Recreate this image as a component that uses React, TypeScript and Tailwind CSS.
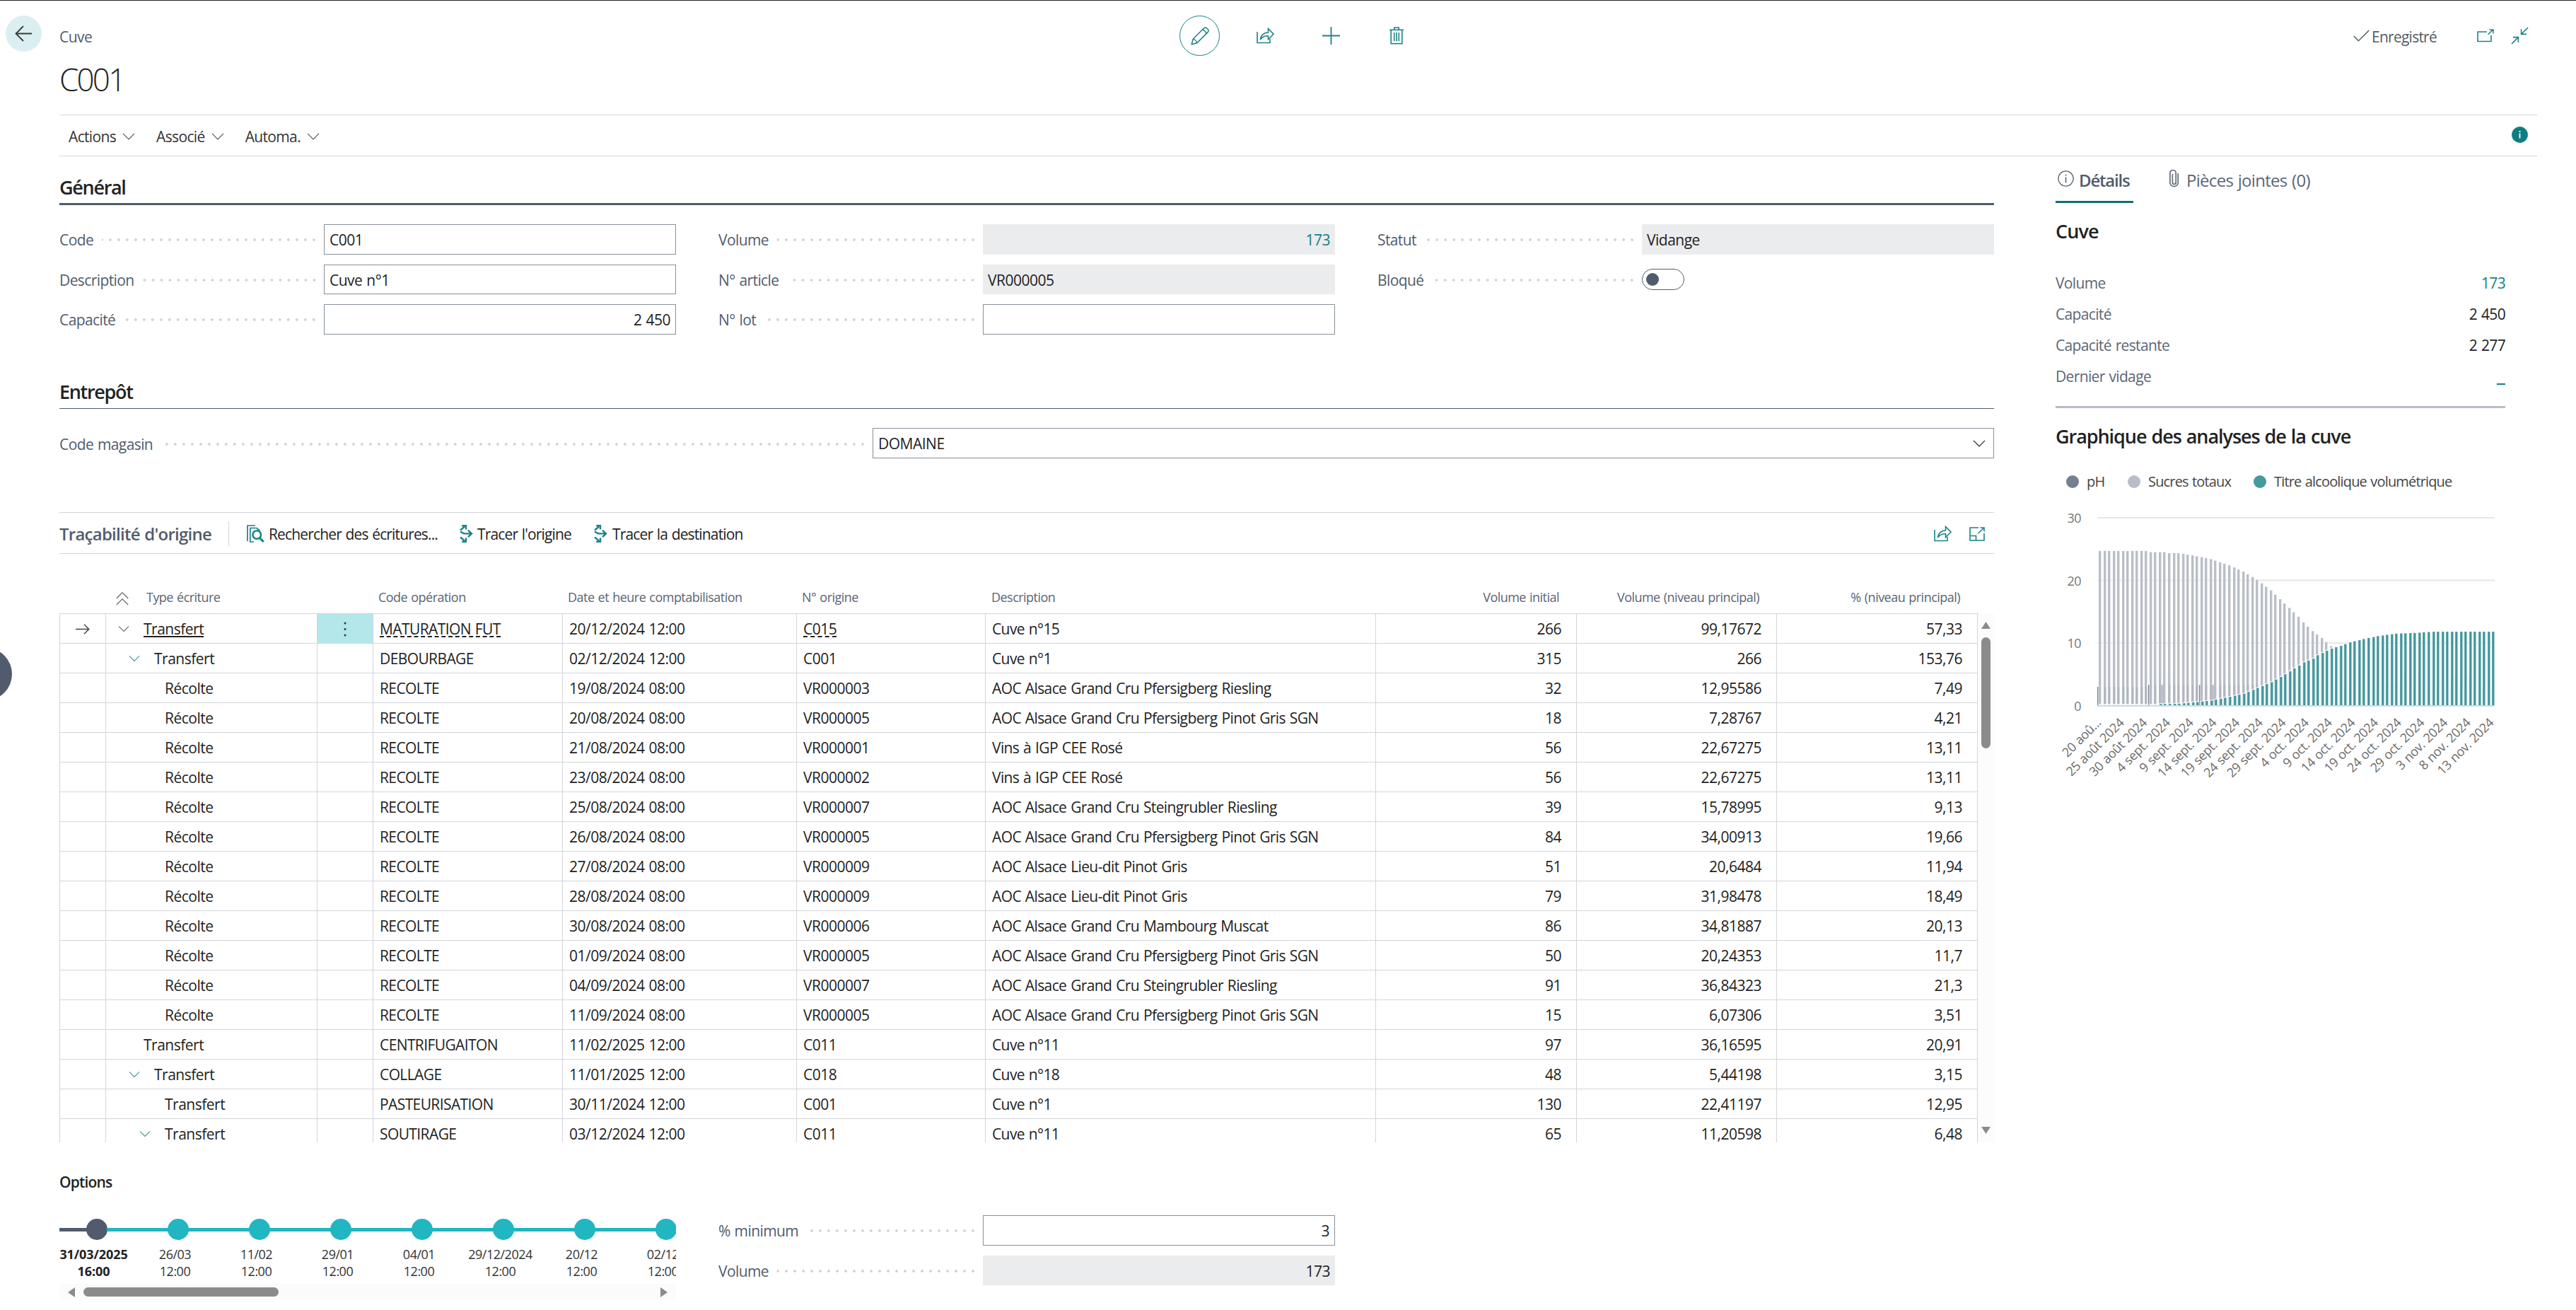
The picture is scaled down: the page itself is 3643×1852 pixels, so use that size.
import type { ReactNode } from 'react';

type Row = {
  level: number;
  open?: boolean;
  type: string;
  code: string;
  date: string;
  origin: string;
  description: string;
  volume: string;
  mainVolume: string;
  percent: string;
};

const row = (
  level: number,
  open: boolean,
  type: string,
  code: string,
  date: string,
  origin: string,
  description: string,
  volume: string,
  mainVolume: string,
  percent: string,
): Row => ({ level, open, type, code, date, origin, description, volume, mainVolume, percent });

const ROWS: Row[] = [
  row(0, true, 'Transfert', 'MATURATION FUT', '20/12/2024 12:00', 'C015', 'Cuve n°15', '266', '99,17672', '57,33'),
  row(1, true, 'Transfert', 'DEBOURBAGE', '02/12/2024 12:00', 'C001', 'Cuve n°1', '315', '266', '153,76'),
  row(2, false, 'Récolte', 'RECOLTE', '19/08/2024 08:00', 'VR000003', 'AOC Alsace Grand Cru Pfersigberg Riesling', '32', '12,95586', '7,49'),
  row(2, false, 'Récolte', 'RECOLTE', '20/08/2024 08:00', 'VR000005', 'AOC Alsace Grand Cru Pfersigberg Pinot Gris SGN', '18', '7,28767', '4,21'),
  row(2, false, 'Récolte', 'RECOLTE', '21/08/2024 08:00', 'VR000001', 'Vins à IGP CEE Rosé', '56', '22,67275', '13,11'),
  row(2, false, 'Récolte', 'RECOLTE', '23/08/2024 08:00', 'VR000002', 'Vins à IGP CEE Rosé', '56', '22,67275', '13,11'),
  row(2, false, 'Récolte', 'RECOLTE', '25/08/2024 08:00', 'VR000007', 'AOC Alsace Grand Cru Steingrubler Riesling', '39', '15,78995', '9,13'),
  row(2, false, 'Récolte', 'RECOLTE', '26/08/2024 08:00', 'VR000005', 'AOC Alsace Grand Cru Pfersigberg Pinot Gris SGN', '84', '34,00913', '19,66'),
  row(2, false, 'Récolte', 'RECOLTE', '27/08/2024 08:00', 'VR000009', 'AOC Alsace Lieu-dit Pinot Gris', '51', '20,6484', '11,94'),
  row(2, false, 'Récolte', 'RECOLTE', '28/08/2024 08:00', 'VR000009', 'AOC Alsace Lieu-dit Pinot Gris', '79', '31,98478', '18,49'),
  row(2, false, 'Récolte', 'RECOLTE', '30/08/2024 08:00', 'VR000006', 'AOC Alsace Grand Cru Mambourg Muscat', '86', '34,81887', '20,13'),
  row(2, false, 'Récolte', 'RECOLTE', '01/09/2024 08:00', 'VR000005', 'AOC Alsace Grand Cru Pfersigberg Pinot Gris SGN', '50', '20,24353', '11,7'),
  row(2, false, 'Récolte', 'RECOLTE', '04/09/2024 08:00', 'VR000007', 'AOC Alsace Grand Cru Steingrubler Riesling', '91', '36,84323', '21,3'),
  row(2, false, 'Récolte', 'RECOLTE', '11/09/2024 08:00', 'VR000005', 'AOC Alsace Grand Cru Pfersigberg Pinot Gris SGN', '15', '6,07306', '3,51'),
  row(0, false, 'Transfert', 'CENTRIFUGAITON', '11/02/2025 12:00', 'C011', 'Cuve n°11', '97', '36,16595', '20,91'),
  row(1, true, 'Transfert', 'COLLAGE', '11/01/2025 12:00', 'C018', 'Cuve n°18', '48', '5,44198', '3,15'),
  row(2, false, 'Transfert', 'PASTEURISATION', '30/11/2024 12:00', 'C001', 'Cuve n°1', '130', '22,41197', '12,95'),
  row(2, true, 'Transfert', 'SOUTIRAGE', '03/12/2024 12:00', 'C011', 'Cuve n°11', '65', '11,20598', '6,48'),
];

const STEPS = [
  ['31/03/2025', '16:00'],
  ['26/03', '12:00'],
  ['11/02', '12:00'],
  ['29/01', '12:00'],
  ['04/01', '12:00'],
  ['29/12/2024', '12:00'],
  ['20/12', '12:00'],
  ['02/12', '12:00'],
];

/* ---------- icons ---------- */

function Chevron({ className = 'text-[#555]' }: { className?: string }) {
  return (
    <svg width="18" height="10" viewBox="0 0 18 10" fill="none" stroke="currentColor" strokeWidth="1.2" className={className}>
      <path d="M1 0.8 9 8.8 17 0.8" />
    </svg>
  );
}

function ShareIcon() {
  return (
    <svg width="25" height="23" viewBox="0 0 25 23" fill="none" stroke="#1a8288" strokeWidth="1.6">
      <path d="M1 6V21.5H19V16" />
      <path d="M5.5 17C6 11.5 10 7 16.5 7V1.5L24 9.2 16.5 16.5V11.8C11.5 11.4 8 13 5.5 17Z" strokeLinejoin="miter" />
    </svg>
  );
}

function PencilIcon() {
  return (
    <svg width="26" height="26" viewBox="0 0 26 26" fill="none" stroke="#1a8288" strokeWidth="1.5" strokeLinejoin="round">
      <path d="M1.2 24.8 3.2 17.2 18.6 1.8C19.8.8 21.6.8 22.8 2L24 3.2C25.2 4.4 25.2 6.2 24.2 7.4L8.8 22.8Z" />
      <path d="M3.2 17.2C5.6 17.6 8.2 20.2 8.8 22.8M16.4 4C18.8 4.6 21.4 7.2 22 9.6" />
    </svg>
  );
}

function TrashIcon() {
  return (
    <svg width="20" height="25" viewBox="0 0 20 25" fill="none" stroke="#1a8288" strokeWidth="1.6">
      <path d="M0 4.2H20M6.8 4V1H13.2V4M2.2 4.5V23.8H17.8V4.5" />
      <path d="M6.7 8V20M10 8V20M13.3 8V20" />
    </svg>
  );
}

function LookupIcon() {
  return (
    <svg width="25" height="25" viewBox="0 0 25 25" fill="none" stroke="#1a8288">
      <path d="M1 23V1H12" strokeWidth="1.7" />
      <path d="M10 24H4.8V4.5H14L18.5 8" strokeWidth="1.7" />
      <circle cx="14.2" cy="14" r="5.8" strokeWidth="2.6" />
      <path d="M17.8 18.2 23.8 24" strokeWidth="3" />
    </svg>
  );
}

function TraceIcon() {
  return (
    <svg width="19" height="25" viewBox="0 0 19 25" fill="none" stroke="#1a8288" strokeWidth="2.4">
      <path d="M1 7.5 7 2.6M3.2 1.2H9V6.4" />
      <path d="M1 9.5 6 12.4H16M12 7.6 17 12.4 12 17.2" />
      <path d="M1 17.5 7 22.4M3.2 23.8H9V18.6" />
    </svg>
  );
}

function InfoIcon() {
  return (
    <svg width="23" height="23" viewBox="0 0 23 23" fill="none" stroke="#5b6676" strokeWidth="1.4">
      <circle cx="11.5" cy="11.5" r="10.6" />
      <path d="M11.5 9.4V17.4M11.5 5.6V7.4" strokeWidth="1.6" />
    </svg>
  );
}

function ClipIcon() {
  return (
    <svg width="13" height="25" viewBox="0 0 13 25" fill="none" stroke="#5b6676" strokeWidth="1.6">
      <path d="M12.2 5V18.6A5.7 5.7 0 0 1 .9 18.6V4.6A3.9 3.9 0 0 1 9.2 4.6V18A2.1 2.1 0 0 1 4.4 18V6" />
    </svg>
  );
}

/* ---------- form fields ---------- */

function Label({ children, width = 'w-[374px]' }: { children: ReactNode; width?: string }) {
  return (
    <div className={`flex ${width} shrink-0 items-center pr-[8px] pt-[2px]`}>
      <span className="whitespace-nowrap tracking-[-0.6px] text-[#505c6d]">{children}</span>
      <span className="ml-[12px] h-[12px] flex-1 bg-[radial-gradient(circle,#cfd1d5_1.5px,transparent_2px)] bg-[length:12px_12px] bg-[position:right_center]" />
    </div>
  );
}

function Field({ label, value = '', readOnly, right, link }: {
  label: string;
  value?: string;
  readOnly?: boolean;
  right?: boolean;
  link?: boolean;
}) {
  return (
    <div className="flex h-[42.5px]">
      <Label>{label}</Label>
      <div
        className={`flex h-full flex-1 items-center px-[7px] pt-[2px] tracking-[-0.5px] ${readOnly ? 'bg-[#ebecee]' : 'border border-[#87909a]'} ${
          right ? 'justify-end' : ''
        } ${link ? 'text-[#167e84]' : ''}`}
      >
        {value}
      </div>
    </div>
  );
}

/* ---------- page header ---------- */

function Header() {
  return (
    <header>
      <div className="mt-[21px] flex h-[57px] items-center pr-[67px]">
        <div className="flex w-[1668px] items-center pl-[8px]">
          <div className="-mt-[6px] flex size-[51px] items-center justify-center rounded-full bg-[#dbeff2]">
            <svg width="25" height="23" viewBox="0 0 25 23" fill="none" stroke="#3b3b3b" strokeWidth="1.8">
              <path d="M24 11.5H1.5M12 1 1.5 11.5 12 22" />
            </svg>
          </div>
          <span className="ml-[25px] mt-[2px] tracking-[-0.5px] text-[#505c6d]">Cuve</span>
        </div>
        <div className="flex size-[57px] items-center justify-center rounded-full border-[1.5px] border-[#1a8288]">
          <PencilIcon />
        </div>
        <div className="ml-[52px]"><ShareIcon /></div>
        <svg width="25" height="25" viewBox="0 0 25 25" stroke="#1a8288" strokeWidth="1.8" className="ml-[68px]">
          <path d="M12.5 0V25M0 12.5H25" />
        </svg>
        <div className="ml-[70px]"><TrashIcon /></div>
        <div className="ml-auto flex items-center">
          <svg width="23" height="17" viewBox="0 0 23 17" fill="none" stroke="#505c6d" strokeWidth="1.5">
            <path d="M.8 9 7.4 15.8 22.2 1" />
          </svg>
          <span className="ml-[3px] mt-[2px] tracking-[-0.75px] text-[#505c6d]">Enregistré</span>
          <svg width="24" height="19" viewBox="0 0 24 19" fill="none" stroke="#1a8288" strokeWidth="1.6" className="ml-[57px]">
            <path d="M14 4H1V17.5H20V9M15.5 7.8 22.5 1M17.5 1H23V6.2" />
          </svg>
          <svg width="25" height="25" viewBox="0 0 25 25" fill="none" stroke="#1a8288" strokeWidth="1.6" className="ml-[24px]">
            <path d="M24 1 15 10M14.6 3.2V10.4H22M1 24 10 15M3 14.6H10.4V22" />
          </svg>
        </div>
      </div>
      <h1 className="h-[83px] pl-[84px] pt-[3px] text-[44px] font-light leading-[60px] tracking-[-2.8px] text-[#222]">C001</h1>
      <div className="ml-[84px] mr-[55px] flex h-[59px] items-center gap-[30px] border-y border-[#d2d4d9] pl-[13px] pr-[13px] pt-[2px] tracking-[-0.65px] text-[#333]">
        {['Actions', 'Associé', 'Automa.'].map((item) => (
          <div key={item} className="flex items-center gap-[9px]">
            {item}
            <Chevron />
          </div>
        ))}
        <svg width="23" height="23" viewBox="0 0 23 23" className="-mt-[5px] ml-auto">
          <circle cx="11.5" cy="11.5" r="11.4" fill="#127c83" />
          <path d="M11.5 9.5V16.5M11.5 6V8" stroke="#fff" strokeWidth="1.8" />
        </svg>
      </div>
    </header>
  );
}

/* ---------- traceability table ---------- */

function Cell({ className = '', children }: { className?: string; children?: ReactNode }) {
  return <div className={`flex shrink-0 items-center whitespace-nowrap border-b border-r border-[#d4d5da] pt-[1px] ${className}`}>{children}</div>;
}

function TableRow({ item, active }: { item: Row; active: boolean }) {
  const indent = item.level === 0 ? 'pl-[17px]' : item.level === 1 ? 'pl-[32px]' : 'pl-[47px]';
  const link = active ? 'mt-[2px] border-b-2 border-dashed border-[#222] leading-[20px]' : '';
  return (
    <div className="flex h-[42px] border-l border-[#d4d5da]">
      <Cell className="w-[65px] justify-center">
        {active && (
          <svg width="20" height="15" viewBox="0 0 20 15" fill="none" stroke="#444" strokeWidth="1.5">
            <path d="M0 7.5H18.5M12 .8 18.7 7.5 12 14.2" />
          </svg>
        )}
      </Cell>
      <Cell className={`w-[299px] ${indent}`}>
        <span className="w-[36px]">{item.open && <Chevron className={`w-[16px] ${active ? 'text-[#667]' : 'text-[#3f9499]'}`} />}</span>
        <span className={active ? 'mt-[2px] border-b-2 border-[#222] leading-[20px]' : ''}>{item.type}</span>
      </Cell>
      <Cell className={`w-[79px] justify-center ${active ? 'bg-[#b3e7ea]' : ''}`}>
        {active && (
          <svg width="4" height="21" viewBox="0 0 4 21" fill="#333">
            <circle cx="2" cy="2" r="1.5" />
            <circle cx="2" cy="10.5" r="1.5" />
            <circle cx="2" cy="19" r="1.5" />
          </svg>
        )}
      </Cell>
      <Cell className="w-[268px] pl-[9px] tracking-[-0.6px]"><span className={link}>{item.code}</span></Cell>
      <Cell className="w-[331px] pl-[9px]">{item.date}</Cell>
      <Cell className="w-[267px] pl-[9px]"><span className={link}>{item.origin}</span></Cell>
      <Cell className="w-[552px] pl-[9px] tracking-[-0.61px]">{item.description}</Cell>
      <Cell className="w-[284px] justify-end pr-[21px]">{item.volume}</Cell>
      <Cell className="w-[283px] justify-end pr-[21px]">{item.mainVolume}</Cell>
      <Cell className="w-[284px] justify-end pr-[21px]">{item.percent}</Cell>
    </div>
  );
}

function Traceability() {
  return (
    <section>
      <div className="mt-[76px] flex h-[59px] items-center border-y border-[#d2d4d9] pt-[2px] tracking-[-0.85px]">
        <h3 className="w-[239px] text-[24px] font-semibold tracking-[-0.75px] text-[#505c6d]">Traçabilité d'origine</h3>
        <div className="h-[35px] w-px bg-[#d2d4d9]" />
        <div className="ml-[25px] flex w-[301px] items-center gap-[6px]"><LookupIcon /><span>Rechercher des écritures...</span></div>
        <div className="flex w-[190px] items-center gap-[6px]"><TraceIcon />Tracer l'origine</div>
        <div className="flex items-center gap-[7px]"><TraceIcon />Tracer la destination</div>
        <div className="ml-auto flex items-center gap-[25px] pr-[13px]">
          <ShareIcon />
          <svg width="22" height="20" viewBox="0 0 22 20" fill="none" stroke="#1a8288" strokeWidth="1.6">
            <path d="M13 1H1V19H21V9M1 12.5H9.5V19M12.5 9 20.5 1.5M15.5 1H21V6.5" />
          </svg>
        </div>
      </div>

      <div className="flex h-[84px] pt-[47px] text-[18px] leading-[28px] tracking-[-0.53px] text-[#5a6574]">
        <div className="flex w-[66px]" />
        <div className="flex w-[378px] pl-[14px]">
          <svg width="18" height="19" viewBox="0 0 18 19" fill="none" stroke="#666" strokeWidth="1.2" className="mt-[7px]">
            <path d="M.8 9 9 .8 17.2 9M.8 18 9 9.8 17.2 18" />
          </svg>
          <span className="ml-[25px]">Type écriture</span>
        </div>
        <div className="w-[268px] pl-[7px]">Code opération</div>
        <div className="w-[331px] pl-[7px]">Date et heure comptabilisation</div>
        <div className="w-[267px] pl-[7px]">N° origine</div>
        <div className="w-[552px] pl-[8px]">Description</div>
        <div className="w-[284px] pr-[25px] text-right">Volume initial</div>
        <div className="w-[283px] pr-[25px] text-right">Volume (niveau principal)</div>
        <div className="w-[284px] pr-[25px] text-right">% (niveau principal)</div>
      </div>

      <div className="flex h-[748px] overflow-hidden">
        <div className="w-[2713px] border-t border-[#d4d5da] tracking-[-0.5px]">
          {ROWS.map((item, i) => <TableRow key={i} item={item} active={i === 0} />)}
        </div>
        <div className="flex flex-1 flex-col items-center bg-[#fcfcfc]">
          <svg width="13" height="10" viewBox="0 0 13 10" fill="#8b8b8b" className="mt-[12px]"><path d="M6.5 0 13 10H0Z" /></svg>
          <div className="mt-[12px] h-[157px] w-[13px] rounded-full bg-[#8b8b8b]" />
          <svg width="13" height="10" viewBox="0 0 13 10" fill="#8b8b8b" className="mb-[12px] mt-auto"><path d="M0 0H13L6.5 10Z" /></svg>
        </div>
      </div>
    </section>
  );
}

/* ---------- options ---------- */

function Timeline() {
  return (
    <div className="overflow-hidden pt-[5px]">
      <div className="flex h-[30px] w-[873px] items-center">
        {STEPS.map(([day], i) => (
          <div key={day} className="flex shrink-0 items-center">
            <div className={i === 0 ? 'h-[5px] w-[39px] bg-[#505c6d]' : 'h-[5px] w-[87px] bg-[#21b6c1]'} />
            <div className={`-mx-px size-[30px] rounded-full ${i === 0 ? 'bg-[#505c6d]' : 'bg-[#21b6c1]'}`} />
          </div>
        ))}
      </div>
      <div className="-ml-[9px] mt-[8px] flex w-[920px] text-center text-[18px] leading-[24px] tracking-[-0.5px] text-[#333]">
        {STEPS.map(([day, time], i) => (
          <div key={day} className={`w-[115px] shrink-0 ${i === 0 ? 'font-bold tracking-[-0.1px] text-[#222]' : ''}`}>
            <div>{day}</div>
            <div>{time}</div>
          </div>
        ))}
      </div>
      <div className="mt-[6px] flex h-[23px] items-center bg-[#fbfbfb] pl-[12px] pr-[12px]">
        <svg width="10" height="14" viewBox="0 0 10 14" fill="#8b8b8b"><path d="M10 0V14L0 7Z" /></svg>
        <div className="ml-[12px] h-[13px] w-[276px] rounded-full bg-[#8b8b8b]" />
        <svg width="10" height="14" viewBox="0 0 10 14" fill="#8b8b8b" className="ml-auto"><path d="M0 0V14L10 7Z" /></svg>
      </div>
    </div>
  );
}

/* ---------- chart ---------- */

const DAYS = 86;
const SUGAR = [[0, 24.7], [10, 24.7], [11, 24.5], [14, 24.5], [15, 24.35], [17, 24.35], [20, 24], [24, 23.4], [28, 22.4], [31, 21.4], [34, 20.1], [37, 18.4], [40, 16.3], [43, 14.2], [44, 13.3], [46, 11.9], [48, 10.8], [50, 9.5], [52, 8.5], [55, 7.5], [60, 6.3], [66, 5.5], [69, 5.3], [77, 5], [85, 5]];
const ALCOHOL = [[0, 0.15], [12, 0.15], [13, 0.25], [17, 0.3], [20, 0.5], [24, 0.8], [28, 1.4], [31, 1.9], [34, 2.8], [37, 3.75], [40, 5], [43, 6.4], [44, 6.9], [46, 7.5], [47, 8.05], [50, 9.1], [52, 9.55], [54, 10.1], [58, 10.8], [60, 11.1], [64, 11.5], [68, 11.6], [72, 11.8], [85, 11.8]];
const TICKS = ['20 aoû...', '25 août 2024', '30 août 2024', '4 sept. 2024', '9 sept. 2024', '14 sept. 2024', '19 sept. 2024', '24 sept. 2024', '29 sept. 2024', '4 oct. 2024', '9 oct. 2024', '14 oct. 2024', '19 oct. 2024', '24 oct. 2024', '29 oct. 2024', '3 nov. 2024', '8 nov. 2024', '13 nov. 2024'];
// days where the pH bar or the sugar bar shows beside its neighbour
const PH_VISIBLE = [0, 11, 14, 22, 25];
const SUGAR_VISIBLE = [52, 55, 66, 69, 77, 80];

function at(points: number[][], k: number) {
  const i = points.findIndex(([x]) => x >= k);
  if (i <= 0) return points[0][1];
  const [x0, y0] = points[i - 1];
  const [x1, y1] = points[i];
  return y0 + ((y1 - y0) * (k - x0)) / (x1 - x0);
}

function Chart() {
  const base = 302.5;
  const unit = 8.85;
  const step = 562 / DAYS;
  const days = Array.from({ length: DAYS }, (_, k) => ({ k, x: Math.round(59 + k * step) }));
  return (
    <svg width="636" height="420" viewBox="0 0 636 420" className="font-['Open_Sans',sans-serif]">
      {[30, 20, 10].map((v) => (
        <rect key={v} x="59" y={base - v * unit - 1} width="562" height="2" fill="#e6e6e6" />
      ))}
      {days.map(({ k, x }) => (
        <rect key={k} x={PH_VISIBLE.includes(k) ? x : x + 2.5} y={base - (k < 11 ? 3 : 3.3) * unit} width="3" height={(k < 11 ? 3 : 3.3) * unit} fill="#505c6d" fillOpacity=".8" />
      ))}
      {days.map(({ k, x }) => {
        const h = at(SUGAR, k) * unit;
        const left = k > 50 && !SUGAR_VISIBLE.includes(k) ? x + 3 : x + 2;
        return (
          <g key={k}>
            <rect x={left - 1} y={base - h - 1} width="5.4" height={h + 1} fill="#fff" fillOpacity=".7" />
            <rect x={left} y={base - h} width="3.4" height={h} fill="#a7aeb9" fillOpacity=".8" />
          </g>
        );
      })}
      {days.map(({ k, x }) => {
        const h = at(ALCOHOL, k) * unit;
        return (
          <g key={k}>
            <rect x={x + 2.3} y={base - h - 1.2} width="5" height={h + 1.2} fill="#fff" fillOpacity={k > 50 ? 1 : 0.9} />
            <rect x={x + 3.2} y={base - h} width="3.3" height={h} fill={k > 12 ? '#3f969c' : '#dcebec'} />
          </g>
        );
      })}
      <rect x="59" y="302" width="562" height="2" fill="#d3d9e8" />
      {[30, 20, 10, 0].map((v) => (
        <text key={v} x="36" y={base - v * unit + 7} textAnchor="end" fontSize="18" letterSpacing="-0.6" fill="#777">{v}</text>
      ))}
      {TICKS.map((t, i) => {
        const x = 59 + (i * 5 + 0.5) * step + 3;
        return (
          <text key={t} x={x} y="328" transform={`rotate(-45 ${x} 328)`} textAnchor="end" fontSize="18" letterSpacing="-0.4" fill="#6b6b6b">{t}</text>
        );
      })}
    </svg>
  );
}

/* ---------- right-hand fact boxes ---------- */

function Details() {
  return (
    <aside className="ml-[87px] w-[636px]">
      <div className="flex h-[66px] text-[24px] text-[#5b6676]">
        <div className="flex w-[110px] items-center border-b-[3px] border-[#0f6f75] pl-[3px]">
          <InfoIcon />
          <span className="ml-[7px] mt-[4px] font-semibold tracking-[-1.2px] text-[#505c6d]">Détails</span>
        </div>
        <div className="ml-[51px] flex items-center pb-[3px]">
          <ClipIcon />
          <span className="ml-[11px] mt-[4px] tracking-[-0.7px]">Pièces jointes (0)</span>
        </div>
      </div>
      <h2 className="mt-[22px] text-[27px] font-semibold leading-[36px] tracking-[-0.9px] text-[#222]">Cuve</h2>
      <div className="mt-[33px] tracking-[-0.65px] text-[#5b6676]">
        <div className="flex h-[44px] items-center justify-between">Volume<span className="text-[#167e84]">173</span></div>
        <div className="flex h-[44px] items-center justify-between">Capacité<span className="text-[#222]">2 450</span></div>
        <div className="flex h-[44px] items-center justify-between">Capacité restante<span className="text-[#222]">2 277</span></div>
        <div className="flex h-[44px] items-center justify-between">Dernier vidage<span className="mt-[22px] h-[2px] w-[12px] bg-[#167e84]" /></div>
      </div>
      <div className="mt-[20px] h-[3px] bg-[#b8bdc6]" />
      <h2 className="mt-[22px] text-[27px] font-semibold leading-[36px] tracking-[-1.05px] text-[#222]">Graphique des analyses de la cuve</h2>
      <div className="mt-[31px] flex h-[29px] items-center pl-[15px] text-[20px] tracking-[-0.84px] text-[#444]">
        <span className="size-[18px] rounded-full bg-[#74808f]" />
        <span className="ml-[11px] w-[58px]">pH</span>
        <span className="size-[18px] rounded-full bg-[#b8bec7]" />
        <span className="ml-[11px] w-[149px]">Sucres totaux</span>
        <span className="size-[18px] rounded-full bg-[#46999f]" />
        <span className="ml-[11px]">Titre alcoolique volumétrique</span>
      </div>
      <Chart />
    </aside>
  );
}

export default function App() {
  return (
    <div className="relative h-[1852px] w-[3643px] overflow-hidden border-t border-[#222] bg-white font-['Open_Sans','Noto_Sans',sans-serif] text-[21px] leading-[28px] text-[#222] [word-spacing:1px]">
      <Header />
      <div className="flex pl-[84px]">
        <main className="w-[2736px]">
          <h2 className="h-[69px] border-b-[3px] border-[#505c6d] pt-[26px] text-[27px] font-semibold leading-[36px] tracking-[-1.3px]">Général</h2>
          <div className="mt-[27px] grid grid-cols-3 gap-x-[60px]">
            <div className="flex flex-col gap-[14px]">
              <Field label="Code" value="C001" />
              <Field label="Description" value="Cuve n°1" />
              <Field label="Capacité" value="2 450" right />
            </div>
            <div className="flex flex-col gap-[14px]">
              <Field label="Volume" value="173" readOnly right link />
              <Field label="N° article" value="VR000005" readOnly />
              <Field label="N° lot" />
            </div>
            <div className="flex flex-col gap-[14px]">
              <Field label="Statut" value="Vidange" readOnly />
              <div className="flex h-[42.5px] items-center">
                <Label>Bloqué</Label>
                <div className="flex h-[30px] w-[60px] items-center rounded-full border-[1.5px] border-[#505c6d] pl-[5px]">
                  <div className="size-[18px] rounded-full bg-[#505c6d]" />
                </div>
              </div>
            </div>
          </div>

          <h2 className="h-[105.5px] border-b border-[#505c6d] pt-[63px] text-[27px] font-semibold leading-[36px] tracking-[-1.3px]">Entrepôt</h2>
          <div className="mt-[27px] flex h-[43px]">
            <Label width="w-[1150px]">Code magasin</Label>
            <div className="flex flex-1 items-center justify-between border border-[#87909a] pl-[7px] pr-[11px] pt-[1px] tracking-[-0.5px]">
              DOMAINE
              <Chevron className="text-[#222]" />
            </div>
          </div>

          <Traceability />

          <h3 className="mt-[42px] font-semibold tracking-[-0.8px]">Options</h3>
          <div className="mt-[33px] grid grid-cols-3 gap-x-[60px]">
            <Timeline />
            <div className="flex flex-col gap-[14px]">
              <Field label="% minimum" value="3" right />
              <Field label="Volume" value="173" readOnly right />
            </div>
          </div>
        </main>
        <Details />
      </div>

      {/* handle of the collapsed side panel */}
      <div className="absolute -left-[57px] top-[915px] size-[74px] rounded-full bg-[#505c6d]" />
    </div>
  );
}
